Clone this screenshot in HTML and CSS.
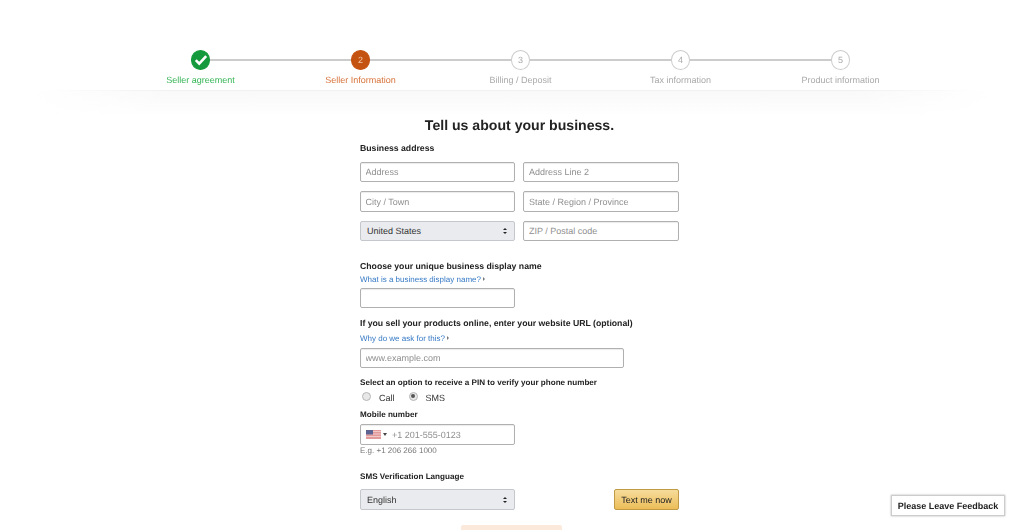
FILE: index.html
```html
<!DOCTYPE html>
<html lang="en">
<head>
<meta charset="utf-8">
<title>Seller registration</title>
<link rel="stylesheet" href="styles.css">
</head>
<body>
<header class="header">
  <ol class="steps">
    <li class="step done">
      <span class="dot"><svg width="14" height="12" viewBox="0 0 14 12"><path d="M1.8 6.2 5.2 9.6 12.2 2.2" fill="none" stroke="#fff" stroke-width="2.6"/></svg></span>
      <span class="step-label">Seller agreement</span>
    </li>
    <li class="step current"><span class="dot">2</span><span class="step-label">Seller Information</span></li>
    <li class="step"><span class="dot">3</span><span class="step-label">Billing / Deposit</span></li>
    <li class="step"><span class="dot">4</span><span class="step-label">Tax information</span></li>
    <li class="step"><span class="dot">5</span><span class="step-label">Product information</span></li>
  </ol>
</header>
<main class="main">
  <form class="form">
    <h1 class="title">Tell us about your business.</h1>
    <div class="label label-address">Business address</div>
    <div class="grid">
      <input class="field" placeholder="Address">
      <input class="field" placeholder="Address Line 2">
      <input class="field" placeholder="City / Town">
      <input class="field" placeholder="State / Region / Province">
      <div class="select"><span>United States</span><span class="updown"></span></div>
      <input class="field" placeholder="ZIP / Postal code">
    </div>
    <div class="label label-display">Choose your unique business display name</div>
    <a class="link link-display" href="#">What is a business display name? <span class="arrow"></span></a>
    <input class="field narrow">
    <div class="label label-url">If you sell your products online, enter your website URL (optional)</div>
    <a class="link link-url" href="#">Why do we ask for this? <span class="arrow"></span></a>
    <input class="field wide" placeholder="www.example.com">
    <div class="label small label-pin">Select an option to receive a PIN to verify your phone number</div>
    <div class="radios">
      <span class="radio"></span><span class="radio-text call">Call</span>
      <span class="radio on"></span><span class="radio-text">SMS</span>
    </div>
    <div class="label small label-mobile">Mobile number</div>
    <div class="phone">
      <svg class="flag" width="15" height="9" viewBox="0 0 15 9">
        <rect width="15" height="9" fill="#e29a9a"/>
        <path d="M0 1.5h15M0 4h15M0 6.5h15" stroke="#f0c8c8" stroke-width="1"/>
        <rect width="7" height="4.5" fill="#5e6491"/>
      </svg>
      <span class="caret"></span>
      <span class="phone-text">+1 201-555-0123</span>
    </div>
    <div class="hint">E.g. +1 206 266 1000</div>
    <div class="label small label-lang">SMS Verification Language</div>
    <div class="send-row">
      <div class="select narrow"><span>English</span><span class="updown"></span></div>
      <button class="btn" type="button">Text me now</button>
    </div>
    <div class="next"></div>
  </form>
</main>
<button class="feedback" type="button">Please Leave Feedback</button>
</body>
</html>
```
FILE: styles.css
```css
* { box-sizing: border-box; }
html, body { margin: 0; height: 530px; overflow: hidden; }
body { background: #fff; font-family: "Liberation Sans", Arial, sans-serif; color: #111; font-size: 9px; text-rendering: geometricPrecision; filter: blur(0.3px); }
input, button { text-rendering: geometricPrecision; }

.header { height: 91px; padding-top: 50px; border-bottom: 1px solid #f1f1f1; border-image: linear-gradient(90deg, #fff 40px, #f1f1f1 170px, #f1f1f1 854px, #fff 984px) 1; }
.steps { list-style: none; display: flex; width: 800px; margin: 0 0 0 120.5px; padding: 0; }
.step { width: 160px; display: flex; flex-direction: column; align-items: center; position: relative; color: #a9a9a9; }
.step::before { content: ""; position: absolute; left: 50%; width: 160px; top: 9px; height: 2px; background: #ccc; }
.step:last-child::before { display: none; }
.dot { position: relative; width: 19.5px; height: 20px; border-radius: 50%; border: 1px solid #ccc; background: #fff; display: flex; align-items: center; justify-content: center; font-size: 9px; color: #aaa; }
.step-label { margin-top: 5px; font-size: 9px; line-height: 11px; }
.done { color: #36b557; }
.done .dot { background: #149a3c; border-color: #149a3c; }
.current { color: #d8733a; }
.current .dot { background: #c45211; border-color: #c45211; color: #f3c7a8; }

.main { background: linear-gradient(90deg, #fff 30px, transparent 170px, transparent 854px, #fff 994px) no-repeat 0 0 / 100% 26px, linear-gradient(#f9f9f9, #fff) no-repeat 0 0 / 100% 26px; }
.form { width: 319px; margin-left: 360px; display: flex; flex-direction: column; align-items: flex-start; }
.title { width: 100%; margin: 0; padding-top: 25.4px; text-align: center; font-size: 14.1px; line-height: 18px; font-weight: bold; color: #222; }
.label { font-weight: bold; font-size: 8.7px; line-height: 11px; color: #222; }
.small { font-size: 8.1px; }
.label-address { margin-top: 9px; }
.grid { display: grid; width: 319px; grid-template-columns: 155px 156px; column-gap: 8px; row-gap: 9px; margin-top: 7.4px; }
.field { display: block; height: 20.5px; width: 100%; padding: 0 4.5px; border: 1px solid #b0b0b0; border-radius: 2px; background: #fff; font: 9px "Liberation Sans", Arial, sans-serif; box-shadow: inset 0 1px 1px rgba(0,0,0,.08); }
.grid .field:nth-child(even) { padding-left: 5px; }
.field::placeholder { color: #8f8f8f; opacity: 1; }
.narrow { width: 155px; }
.wide { width: 264px; }
.select { height: 20.5px; padding: 0 7px 0 6px; border: 1px solid #c4c8cd; border-radius: 2px; background: #e9ebee; display: flex; align-items: center; justify-content: space-between; font-size: 9px; color: #333; }
.updown { width: 4px; height: 6px; position: relative; }
.updown::before, .updown::after { content: ""; position: absolute; left: 0; border-left: 2px solid transparent; border-right: 2px solid transparent; }
.updown::before { top: 0; border-bottom: 2.5px solid #222; }
.updown::after { bottom: 0; border-top: 2.5px solid #222; }
.link { color: #3478c4; text-decoration: none; font-size: 8px; line-height: 11px; }
.arrow { display: inline-block; vertical-align: 1px; border-left: 2px solid #777; border-top: 2px solid transparent; border-bottom: 2px solid transparent; }
.label-display { margin-top: 19.5px; }
.link-display { margin-top: 2px; margin-bottom: 2.9px; }
.label-url { margin-top: 9.8px; }
.link-url { margin-top: 4.5px; margin-bottom: 3.2px; }
.label-pin { margin-top: 9.3px; }
.radios { display: flex; align-items: center; height: 15px; margin-top: 2px; font-size: 9px; color: #333; }
.radio { width: 9px; height: 9px; margin: -3px 0 0 2px; border-radius: 50%; border: 1px solid #b5b5b5; background: #e8e8e8; position: relative; }
.radio.on::after { content: ""; position: absolute; left: 1.5px; top: 1.5px; width: 4px; height: 4px; border-radius: 50%; background: #555; }
.radio-text { margin-left: 8px; }
.call { margin-right: 12px; }
.label-mobile { margin-top: 3.5px; }
.phone { width: 155px; height: 20.5px; margin-top: 4.3px; padding-left: 5px; border: 1px solid #b0b0b0; border-radius: 2px; display: flex; align-items: center; box-shadow: inset 0 1px 1px rgba(0,0,0,.08); }
.caret { margin-left: 2px; border-top: 3px solid #444; border-left: 2.5px solid transparent; border-right: 2.5px solid transparent; }
.phone-text { margin-left: 5px; font-size: 9px; color: #8f8f8f; }
.hint { margin-top: 0.7px; font-size: 8px; line-height: 11px; color: #777; }
.label-lang { margin-top: 14.2px; }
.send-row { display: flex; justify-content: space-between; align-items: center; width: 319px; margin-top: 7.8px; }
.btn { width: 65px; height: 20.5px; padding: 0; border: 1px solid #c09a45; border-radius: 2px; background: linear-gradient(#f6dc9b, #ecbd58); font: 9px "Liberation Sans", Arial, sans-serif; color: #222; }
.next { width: 101px; height: 20px; margin: 15px 0 0 101px; background: #fbeadb; border-radius: 2px; }

.feedback { position: fixed; left: 891px; top: 495px; width: 114px; height: 21px; padding: 0; background: #fff; border: 1px solid #ccc; box-shadow: 0 0 2px rgba(0,0,0,.3); font: bold 9px "Liberation Sans", Arial, sans-serif; color: #222; }
```
